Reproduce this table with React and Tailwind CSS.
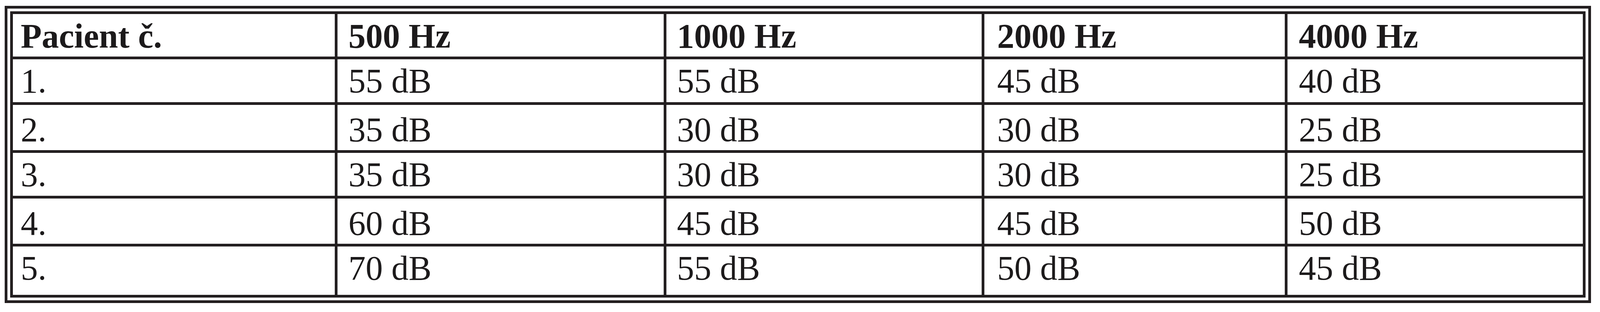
import React from "react";

const header = ["Pacient č.", "500 Hz", "1000 Hz", "2000 Hz", "4000 Hz"];
const rows = [
  ["1.", "55 dB", "55 dB", "45 dB", "40 dB"],
  ["2.", "35 dB", "30 dB", "30 dB", "25 dB"],
  ["3.", "35 dB", "30 dB", "30 dB", "25 dB"],
  ["4.", "60 dB", "45 dB", "45 dB", "50 dB"],
  ["5.", "70 dB", "55 dB", "50 dB", "45 dB"],
];

const colPad = ["pl-[20px]", "pl-[28px]", "pl-[27px]", "pl-[33px]", "pl-[29px]"];
const rowPad = ["pt-[13px]", "pt-[12px]", "pt-[20px]", "pt-[12px]", "pt-[20px]", "pt-[12px]"];

export default function App() {
  const all = [header, ...rows];
  return (
    <div className="bg-white min-h-[800px] pt-[15px] pl-[12px] pr-[23px]">
      <div className="border-[7px] border-[#231f20] p-[7px] bg-white">
        <div
          className="grid grid-cols-[1041fr_1055fr_1019fr_972fr_955fr] grid-rows-[109px_110px_116px_110px_116px_124px] gap-[7px] bg-[#231f20] border-[7px] border-[#231f20] text-[88px] leading-[88px] text-[#1c1a1b] whitespace-nowrap"
          style={{ fontFamily: '"Liberation Serif", "Times New Roman", serif' }}
        >
          {all.map((r, ri) =>
            r.map((c, ci) => (
              <div
                key={ri + "-" + ci}
                className={`bg-white ${colPad[ci]} ${rowPad[ri]} ${ri === 0 ? "font-bold" : "font-normal"}`}
              >
                {c}
              </div>
            ))
          )}
        </div>
      </div>
    </div>
  );
}
